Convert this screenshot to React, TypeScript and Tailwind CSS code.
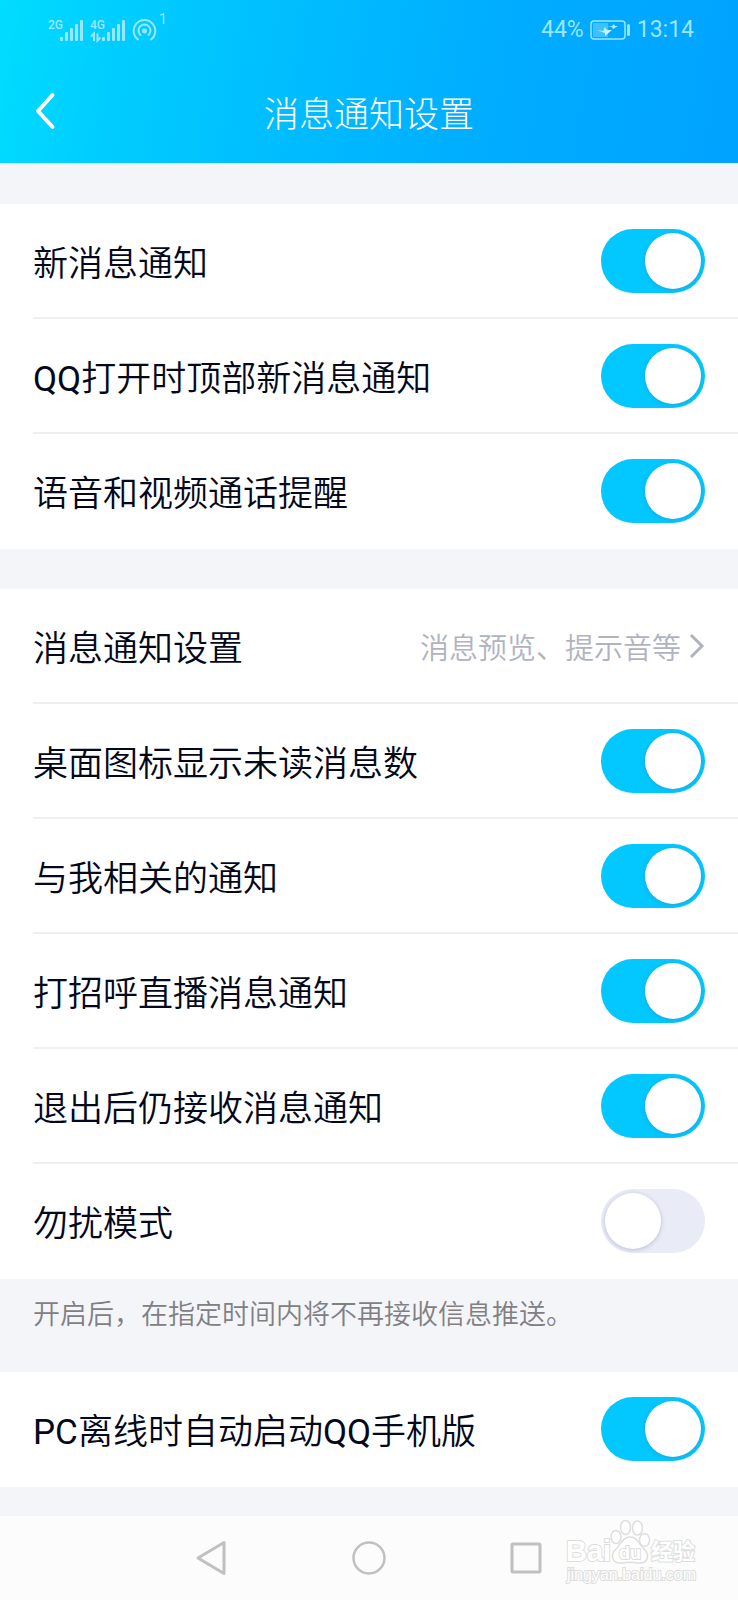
import React, { useState } from "react";

const initialGroups = [
  {
    items: [
      { label: "新消息通知", on: true },
      { label: "QQ打开时顶部新消息通知", on: true },
      { label: "语音和视频通话提醒", on: true },
    ],
  },
  {
    items: [
      { label: "消息通知设置", detail: "消息预览、提示音等" },
      { label: "桌面图标显示未读消息数", on: true },
      { label: "与我相关的通知", on: true },
      { label: "打招呼直播消息通知", on: true },
      { label: "退出后仍接收消息通知", on: true },
      { label: "勿扰模式", on: false },
    ],
    note: "开启后，在指定时间内将不再接收信息推送。",
  },
  {
    items: [{ label: "PC离线时自动启动QQ手机版", on: true }],
  },
];

type Item = { label: string; on?: boolean; detail?: string };

const SignalBars = () => (
  <g fill="currentColor">
    <rect x="0" y="17" width="3" height="4" rx="1" />
    <rect x="5" y="12" width="3" height="9" rx="1" />
    <rect x="10" y="8" width="3" height="13" rx="1" />
    <rect x="15" y="4" width="3" height="17" rx="1" />
    <rect x="20" y="0" width="3" height="21" rx="1" />
  </g>
);

const StatusBar = () => (
  <div className="flex h-[60px] items-center justify-between pl-12 pr-11 text-[#9be6ff]">
    <svg width="130" height="44" viewBox="0 -6 130 44" aria-hidden="true">
      <g fill="currentColor" fontFamily="Roboto, sans-serif" fontWeight="500">
        <text x="0" y="15" fontSize="12">2G</text>
        <text x="42" y="15" fontSize="12">4G</text>
        <text x="111" y="10" fontSize="14" fontWeight="400">1</text>
      </g>
      <g transform="translate(12 6)">
        <SignalBars />
      </g>
      <g transform="translate(54 6)">
        <SignalBars />
      </g>
      <path
        d="M43 22.500l3-3v7.500M49.500 19.500v7l3-3"
        fill="none"
        stroke="currentColor"
        strokeWidth="2"
      />
      <g fill="none" stroke="currentColor" strokeWidth="2" strokeLinecap="round">
        <path d="M90 25.500A10.800 10.800 0 1 1 103 25.500" />
        <path d="M92.500 21A6 6 0 1 1 100.500 21" />
      </g>
      <circle cx="96.500" cy="17" r="2.500" fill="currentColor" />
    </svg>
    <div className="flex items-center gap-1.5 text-[23px]">
      <span>44%</span>
      <svg width="41" height="20" viewBox="0 0 41 20" aria-hidden="true">
        <rect x="1" y="1" width="34" height="18" rx="3" fill="none" stroke="currentColor" strokeWidth="1.500" />
        <rect x="3" y="3" width="15" height="14" fill="currentColor" opacity="0.4" />
        <rect x="37" y="4" width="3" height="12" rx="1.500" fill="currentColor" />
        <path d="M7 10l6 1 2-4 2 3 5 0-7 6v-3z" fill="#c8f1ff" />
        <path d="M18 7l4-1 2-2 1 2 3 0-5 3-1-2z" fill="#b4ecff" />
      </svg>
      <span>13:14</span>
    </div>
  </div>
);

const Header = () => (
  <header className="bg-[linear-gradient(100deg,#00ddff_0%,#00ceff_15%,#00c0ff_35%,#00adff_66%,#00a3ff_100%)]">
    <StatusBar />
    <div className="grid h-[103px] grid-cols-[80px_1fr_80px] items-center">
      <button type="button" aria-label="返回" className="flex h-full items-center pl-8">
        <svg width="26" height="40" viewBox="0 0 26 40" fill="none" stroke="#fff" strokeWidth="4" strokeLinecap="round" strokeLinejoin="round">
          <path d="M20.500 3L6 19L20.500 35" />
        </svg>
      </button>
      <h1 className="pt-2.5 text-center text-[35px] font-light text-white">消息通知设置</h1>
    </div>
  </header>
);

// Latin runs are set one step heavier so they sit evenly beside the Chinese text
const LabelText = ({ text }: { text: string }) => (
  <>
    {text.split(/([A-Z]+)/).map((part, i) =>
      /^[A-Z]+$/.test(part) ? (
        <span key={i} className="font-normal">{part}</span>
      ) : (
        part
      )
    )}
  </>
);

const Switch = ({ id, checked, onChange }: { id: string; checked: boolean; onChange: () => void }) => (
  <input
    id={id}
    type="checkbox"
    role="switch"
    checked={checked}
    onChange={onChange}
    className="flex h-16 w-[104px] shrink-0 cursor-pointer appearance-none items-center rounded-full bg-[#e9ebf6] px-1 before:size-14 before:rounded-full before:bg-white before:shadow-[0_1px_4px_rgba(90,100,140,0.35)] checked:justify-end checked:bg-[#02c8ff]"
  />
);

const SettingRow = ({ item, id, last }: { item: Item; id: string; last: boolean }) => {
  const [on, setOn] = useState(!!item.on);
  const line = last ? "border-transparent" : "border-[#eff0f4]";

  if (item.detail) {
    return (
      <li className="pl-[33px]">
        <button type="button" className={`flex h-[115px] w-full items-center justify-between border-b-2 pr-[33px] text-left ${line}`}>
          <span className="pt-2.5 text-[35px] font-[350] text-[#03081a]">{item.label}</span>
          <span className="flex items-center gap-1.5 text-[29px] font-[350] text-[#b0b3bf]">
            <span className="pt-2">{item.detail}</span>
            <svg width="18" height="26" viewBox="0 0 18 26" fill="none" stroke="currentColor" strokeWidth="3" aria-hidden="true">
              <path d="M4 2L15 13L4 24" />
            </svg>
          </span>
        </button>
      </li>
    );
  }

  return (
    <li className="pl-[33px]">
      <div className={`flex h-[115px] items-center justify-between border-b-2 pr-[33px] ${line}`}>
        <label htmlFor={id} className="pt-2.5 text-[35px] font-[350] text-[#03081a]">
          <LabelText text={item.label} />
        </label>
        <Switch id={id} checked={on} onChange={() => setOn(!on)} />
      </div>
    </li>
  );
};

const Watermark = () => (
  <svg className="absolute bottom-3 right-9" width="138" height="70" viewBox="0 0 138 70" role="img" aria-label="Baidu 经验">
    <g fill="#fff" stroke="#dedede" strokeWidth="1.500">
      <ellipse cx="52" cy="19" rx="5" ry="6.500" />
      <ellipse cx="61.500" cy="9.500" rx="5" ry="7" />
      <ellipse cx="73.500" cy="10" rx="5" ry="7" />
      <ellipse cx="80.500" cy="22" rx="5" ry="6.500" />
      <path d="M66 19c7 0 9 7 14 12c7 7 3 15-6 14c-6-1-10-1-16 0c-9 1-13-7-6-14c5-5 7-12 14-12z" />
      <g fontWeight="700" style={{ paintOrder: "stroke" }} strokeWidth="2">
        <text x="2" y="43" fontSize="29" fontFamily="Liberation Sans, sans-serif">Bai</text>
        <text x="55" y="41" fontSize="18" fontFamily="Liberation Sans, sans-serif">du</text>
        <text x="87" y="41" fontSize="22" fontFamily="Noto Sans CJK SC, sans-serif">经验</text>
        <text x="3" y="62" fontSize="16" fontWeight="400" fontFamily="Liberation Sans, sans-serif">jingyan.baidu.com</text>
      </g>
    </g>
  </svg>
);

const NavBar = () => (
  <nav className="relative flex h-[84px] items-center justify-center gap-[122px] bg-[#fcfcfc] text-[#c0c0c0]">
    <button type="button" aria-label="返回">
      <svg width="36" height="36" viewBox="0 0 36 36" fill="none" stroke="currentColor" strokeWidth="3" strokeLinejoin="round">
        <path d="M31 2.500V33.500L5 18Z" />
      </svg>
    </button>
    <button type="button" aria-label="主页">
      <svg width="36" height="36" viewBox="0 0 36 36" fill="none" stroke="currentColor" strokeWidth="2.500">
        <circle cx="18" cy="18" r="15.500" />
      </svg>
    </button>
    <button type="button" aria-label="最近任务">
      <svg width="36" height="36" viewBox="0 0 36 36" fill="none" stroke="currentColor" strokeWidth="3">
        <rect x="3" y="4" width="28" height="28" rx="1" />
      </svg>
    </button>
    <Watermark />
  </nav>
);

const App = () => {
  return (
    <div className="min-h-screen bg-[#f4f5f9] font-[Roboto,'Noto_Sans_CJK_SC',sans-serif]">
      <Header />
      <main className="pb-[29px] pt-[41px]">
        {initialGroups.map((group, g) => (
          <section key={g}>
            <ul className="bg-white">
              {group.items.map((item, i) => (
                <SettingRow
                  key={item.label}
                  id={`setting-${g}-${i}`}
                  item={item}
                  last={i === group.items.length - 1}
                />
              ))}
            </ul>
            {group.note && (
              <p className="h-[93px] px-[33px] pt-4 text-[27px] font-[350] leading-10 text-[#808083]">{group.note}</p>
            )}
            {!group.note && g < initialGroups.length - 1 && <div className="h-10" />}
          </section>
        ))}
      </main>
      <NavBar />
    </div>
  );
};

export default App;
